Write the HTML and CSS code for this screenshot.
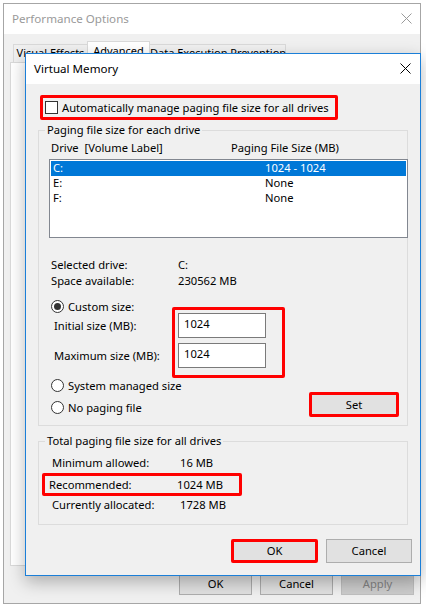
FILE: index.html
```html
<!DOCTYPE html>
<html lang="en">
<head>
<meta charset="utf-8">
<title>Virtual Memory</title>
<link rel="stylesheet" href="styles.css">
</head>
<body>
<div class="perf">
  <div class="perf-title">
    <span>Performance Options</span>
    <svg class="x-icon" width="11" height="11" viewBox="0 0 11 11"><path d="M0.5 0.5 L10.5 10.5 M10.5 0.5 L0.5 10.5" stroke="#9a9a9a" stroke-width="1"/></svg>
  </div>
  <div class="perf-body">
    <div class="tabs">
      <div class="tab t-ve">Visual Effects</div>
      <div class="tab t-adv sel">Advanced</div>
      <div class="tab t-dep">Data Execution Prevention</div>
    </div>
    <div class="tab-panel"></div>
    <div class="perf-buttons">
      <div class="btn pbtn">OK</div>
      <div class="btn pbtn">Cancel</div>
      <div class="btn pbtn disabled">Apply</div>
    </div>
  </div>

  <div class="vm">
    <div class="vm-title">
      <span>Virtual Memory</span>
      <svg class="x-icon" width="11" height="11" viewBox="0 0 11 11"><path d="M0.5 0.5 L10.5 10.5 M10.5 0.5 L0.5 10.5" stroke="#000" stroke-width="1"/></svg>
    </div>
    <div class="vm-body">
      <div class="hl auto"><span class="chk"></span><span>Automatically manage paging file size for all drives</span></div>

      <fieldset class="grp g1">
        <legend>Paging file size for each drive</legend>
        <div class="cols"><span class="c1">Drive&nbsp; [Volume Label]</span><span>Paging File Size (MB)</span></div>
        <div class="list">
          <div class="lrow sel"><span class="d">C:</span><span>1024 - 1024</span></div>
          <div class="lrow"><span class="d">E:</span><span>None</span></div>
          <div class="lrow"><span class="d">F:</span><span>None</span></div>
        </div>
        <div class="info first"><span class="k">Selected drive:</span><span>C:</span></div>
        <div class="info"><span class="k">Space available:</span><span>230562 MB</span></div>
        <div class="sizes">
          <div class="lbls">
            <div class="rrow"><span class="radio on"></span><span>Custom size:</span></div>
            <div class="lbl l1">Initial size (MB):</div>
            <div class="lbl l2">Maximum size (MB):</div>
            <div class="rrow r2"><span class="radio"></span><span>System managed size</span></div>
            <div class="rrow r3"><span class="radio"></span><span>No paging file</span></div>
          </div>
          <div class="ctrls">
            <div class="hl boxes">
              <div class="tb">1024</div>
              <div class="tb tb2">1024</div>
            </div>
            <div class="btn hlbtn set">Set</div>
          </div>
        </div>
      </fieldset>

      <fieldset class="grp g2">
        <legend>Total paging file size for all drives</legend>
        <div class="trow"><span class="k2">Minimum allowed:</span><span>16 MB</span></div>
        <div class="trow hl rec"><span class="k2">Recommended:</span><span>1024 MB</span></div>
        <div class="trow last"><span class="k2">Currently allocated:</span><span>1728 MB</span></div>
      </fieldset>

      <div class="vm-buttons">
        <div class="btn hlbtn okb">OK</div>
        <div class="btn cancelb">Cancel</div>
      </div>
    </div>
  </div>
</div>
</body>
</html>
```

FILE: styles.css
```css
* { box-sizing: border-box; }

html, body {
  margin: 0;
  padding: 0;
  background: #ffffff;
}

body {
  font-family: "Noto Sans", "DejaVu Sans", sans-serif;
  font-size: 11.2px;
  color: #000;
}

/* Outer window */
.perf {
  position: relative;
  margin: 3px 0 0 3px;
  width: 418px;
  height: 601px;
  border: 1px solid #a6a6a6;
  background: #f0f0f0;
  display: flex;
  flex-direction: column;
}

.perf-title {
  height: 30px;
  flex: none;
  background: #ffffff;
  color: #9a9a9a;
  font-size: 11.6px;
  display: flex;
  align-items: center;
  justify-content: space-between;
  padding: 0 8px 1px 8px;
}

.x-icon { display: block; }

.perf-body {
  flex: 1;
  padding: 7px 6px 0 6px;
  display: flex;
  flex-direction: column;
}

.tabs {
  display: flex;
  align-items: flex-end;
  height: 21px;
  padding-left: 3px;
  position: relative;
  z-index: 1;
  font-size: 11px;
}

.tab {
  height: 18px;
  border: 1px solid #d9d9d9;
  border-bottom: none;
  background: #f0f0f0;
  line-height: 16px;
  white-space: nowrap;
  text-align: center;
}

.t-ve { width: 75px; }
.t-adv { width: 63px; margin-left: -1px; }
.t-dep { width: 137px; margin-left: -1px; }

.tab.sel {
  height: 22px;
  margin-bottom: -1px;
  background: #ffffff;
  position: relative;
  z-index: 2;
  line-height: 17px;
}

.tab-panel {
  width: 404px;
  height: 504px;
  border: 1px solid #d9d9d9;
  background: #ffffff;
  flex: none;
}

.perf-buttons {
  margin-top: 6px;
  display: flex;
  justify-content: flex-end;
  gap: 8px;
}

.btn {
  background: #e1e1e1;
  border: 1px solid #adadad;
  display: flex;
  align-items: center;
  justify-content: center;
  padding-bottom: 1px;
}

.pbtn { width: 73px; height: 23px; }

.btn.disabled {
  background: #cccccc;
  border-color: #bfbfbf;
  color: #838383;
}

/* Virtual Memory dialog */
.vm {
  position: absolute;
  left: 21px;
  top: 49px;
  width: 396px;
  height: 523px;
  border: 1px solid #1b7fd8;
  background: #f0f0f0;
  box-shadow: 0 6px 16px rgba(0, 0, 0, 0.28);
  display: flex;
  flex-direction: column;
  z-index: 5;
}

.vm-title {
  height: 30px;
  flex: none;
  background: #ffffff;
  font-size: 11.6px;
  display: flex;
  align-items: center;
  justify-content: space-between;
  padding: 0 9px 1px 8px;
}

.vm-body {
  flex: 1;
  padding: 11px 8px 0 12px;
}

.hl {
  border: 3px solid #ff0000;
  border-radius: 2px;
}

.auto {
  margin-left: 2px;
  width: 298px;
  height: 25px;
  display: flex;
  align-items: center;
  padding-left: 2px;
  gap: 4px;
  white-space: nowrap;
}

.chk {
  width: 13px;
  height: 13px;
  border: 1px solid #333333;
  background: #ffffff;
  flex: none;
}

/* group boxes */
.grp {
  margin: 3px 0 0 0;
  padding: 0 0 8px 0;
  width: 370px;
  border: 1px solid #dcdcdc;
  min-inline-size: 0;
}

.grp legend {
  margin-left: 6px;
  padding: 0 2px;
  line-height: 14px;
  height: 14px;
}

.cols {
  margin-top: 3px;
  padding-left: 12px;
  display: flex;
  line-height: 15px;
}

.cols .c1 { width: 180px; }

.list {
  margin: 4px 0 0 10px;
  width: 359px;
  height: 79px;
  border: 1px solid #828790;
  background: #ffffff;
  padding: 1px 1px 0 1px;
}

.lrow {
  height: 15px;
  line-height: 14px;
  display: flex;
  padding-left: 2px;
}

.lrow .d { width: 212px; }

.lrow.sel {
  background: #0078d7;
  color: #ffffff;
}

.info {
  padding-left: 12px;
  display: flex;
  line-height: 16px;
}

.info.first { margin-top: 19px; }

.info .k { width: 127px; }

.sizes {
  margin-top: 9px;
  display: flex;
}

.lbls {
  margin-left: 12px;
  width: 121px;
  flex: none;
  white-space: nowrap;
}

.rrow {
  height: 16px;
  display: flex;
  align-items: center;
  gap: 4px;
}

.radio {
  width: 13px;
  height: 13px;
  border: 1px solid #333333;
  border-radius: 50%;
  background: #ffffff;
  flex: none;
  display: flex;
  align-items: center;
  justify-content: center;
}

.radio.on::after {
  content: "";
  width: 7px;
  height: 7px;
  border-radius: 50%;
  background: #333333;
}

.lbl {
  line-height: 16px;
  padding-left: 3px;
}

.l1 { margin-top: 4px; }
.l2 { margin-top: 14px; }
.r2 { margin-top: 13px; }
.r3 { margin-top: 6px; }

.ctrls {
  display: flex;
  flex-direction: column;
  align-items: flex-start;
}

.boxes {
  margin-top: 9px;
  width: 113px;
  height: 71px;
  padding: 3px 0 0 3px;
}

.tb {
  width: 88px;
  height: 25px;
  background: #ffffff;
  border: 1px solid #7a7a7a;
  padding-left: 5px;
  line-height: 19px;
}

.tb2 { margin-top: 5px; }

.hlbtn {
  border: 3px solid #ff0000;
  border-radius: 2px;
}

.set {
  margin-top: 14px;
  margin-left: 137px;
  width: 90px;
  height: 25px;
}

.g2 { margin-top: 8px; padding-bottom: 9px; }

.trow {
  height: 21px;
  display: flex;
  align-items: center;
  padding-left: 13px;
}

.trow:first-of-type { margin-top: 4px; }

.trow .k2 { width: 128px; flex: none; }

.trow.rec {
  margin-left: 3px;
  width: 200px;
  height: 23px;
  padding-left: 4px;
}

.trow.last { margin-top: -2px; }

.vm-buttons {
  margin-top: 14px;
  display: flex;
  justify-content: flex-end;
  gap: 8px;
}

.okb { width: 87px; height: 24px; }
.cancelb { width: 86px; height: 24px; }
```
